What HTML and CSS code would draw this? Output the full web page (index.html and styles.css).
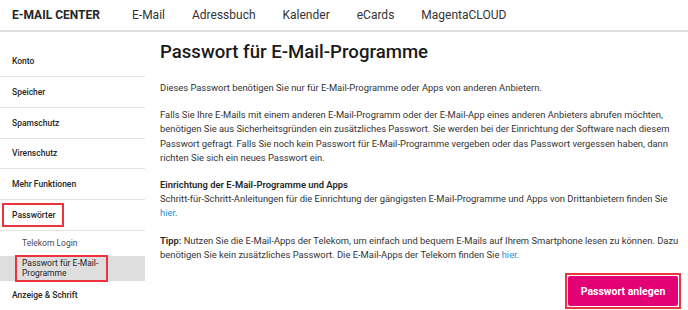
FILE: index.html
```html
<!DOCTYPE html>
<html lang="de">
<head>
<meta charset="utf-8">
<title>E-Mail Center</title>
<link rel="stylesheet" href="styles.css">
</head>
<body>
<header class="topbar">
  <div class="brand">E-MAIL CENTER</div>
  <nav class="topnav">
    <a class="topnav-item" href="#">E-Mail</a>
    <a class="topnav-item" href="#">Adressbuch</a>
    <a class="topnav-item" href="#">Kalender</a>
    <a class="topnav-item" href="#">eCards</a>
    <a class="topnav-item" href="#">MagentaCLOUD</a>
  </nav>
</header>
<div class="layout">
  <aside class="sidebar">
    <div class="side-item"><span>Konto</span></div>
    <div class="side-item"><span>Speicher</span></div>
    <div class="side-item"><span>Spamschutz</span></div>
    <div class="side-item"><span>Virenschutz</span></div>
    <div class="side-item"><span>Mehr Funktionen</span></div>
    <div class="side-item side-open"><span class="mark mark-top">Passwörter</span></div>
    <div class="side-sub"><span>Telekom Login</span></div>
    <div class="side-sub side-active"><span class="mark mark-sub">Passwort für E-Mail-<br>Programme</span></div>
    <div class="side-item"><span>Anzeige &amp; Schrift</span></div>
  </aside>
  <main class="content">
    <h1 class="title">Passwort für E-Mail-Programme</h1>
    <p class="text">Dieses Passwort benötigen Sie nur für E-Mail-Programme oder Apps von anderen Anbietern.</p>
    <p class="text">Falls Sie Ihre E-Mails mit einem anderen E-Mail-Programm oder der E-Mail-App eines anderen Anbieters abrufen möchten, benötigen Sie aus Sicherheitsgründen ein zusätzliches Passwort. Sie werden bei der Einrichtung der Software nach diesem Passwort gefragt. Falls Sie noch kein Passwort für E-Mail-Programme vergeben oder das Passwort vergessen haben, dann richten Sie sich ein neues Passwort ein.</p>
    <p class="text"><strong class="sub-head">Einrichtung der E-Mail-Programme und Apps</strong><br>Schritt-für-Schritt-Anleitungen für die Einrichtung der gängigsten E-Mail-Programme und Apps von Drittanbietern finden Sie <a class="link" href="#">hier</a>.</p>
    <p class="text"><strong class="sub-head">Tipp:</strong> Nutzen Sie die E-Mail-Apps der Telekom, um einfach und bequem E-Mails auf Ihrem Smartphone lesen zu können. Dazu benötigen Sie kein zusätzliches Passwort. Die E-Mail-Apps der Telekom finden Sie <a class="link" href="#">hier</a>.</p>
    <div class="actions">
      <span class="btn-mark"><button class="btn" type="button">Passwort anlegen</button></span>
    </div>
  </main>
</div>
</body>
</html>
```
FILE: styles.css
```css
* { box-sizing: border-box; }
html, body { margin: 0; padding: 0; background: #fff; }
body {
  font-family: Roboto, "Liberation Sans", Arial, sans-serif;
  color: #262626;
  overflow: hidden;
}
.topbar {
  display: flex;
  align-items: center;
  height: 32px;
  border-bottom: 2px solid #e0e0e0;
  padding-left: 12px;
}
.brand {
  font-size: 12px;
  font-weight: 700;
  color: #262626;
  width: 120px;
}
.topnav { display: flex; gap: 27px; }
.topnav-item {
  font-size: 12px;
  color: #333;
  text-decoration: none;
}
.layout {
  display: flex;
  padding-top: 8px;
}
.sidebar {
  width: 145px;
  flex: none;
  margin-top: 6.5px;
  font-size: 8.5px;
  font-weight: 500;
  color: #262626;
}
.side-item {
  height: 30.7px;
  display: flex;
  align-items: center;
  padding-left: 12px;
  border-bottom: 1px solid #e3e3e3;
}
.side-sub {
  height: 25px;
  display: flex;
  align-items: center;
  padding-left: 22px;
  color: #4a4a5a;
  font-weight: 400;
}
.side-active {
  background: #dedede;
  color: #262626;
  line-height: 10.5px;
}
.mark {
  outline: 2px solid #ee3340;
  outline-offset: 0;
}
.mark-top { padding: 5px 7px 5px 8px; margin-left: -8px; }
.mark-sub { padding: 1px 8px 1px 5px; margin-left: -5px; }
.content {
  margin-left: 15px;
  width: 526px;
}
.title {
  margin: 0 0 17px;
  font-size: 18.6px;
  font-weight: 500;
  color: #1a1a1a;
  line-height: 24px;
}
.text {
  margin: 0 0 13px;
  font-size: 9.4px;
  line-height: 14.2px;
  color: #333;
}
.sub-head { font-weight: 600; color: #262626; }
.link { color: #2d8fcf; text-decoration: none; }
.actions {
  display: flex;
  justify-content: flex-end;
  margin-top: 1px;
  padding-right: 7px;
}
.btn-mark {
  outline: 2px solid #ee3340;
  display: inline-flex;
  padding: 1px;
}
.btn {
  border: 0;
  background: #e20074;
  color: #fff;
  font-family: inherit;
  font-weight: 700;
  font-size: 10.5px;
  height: 30px;
  width: 110px;
  border-radius: 2px;
  padding: 0;
}
```
